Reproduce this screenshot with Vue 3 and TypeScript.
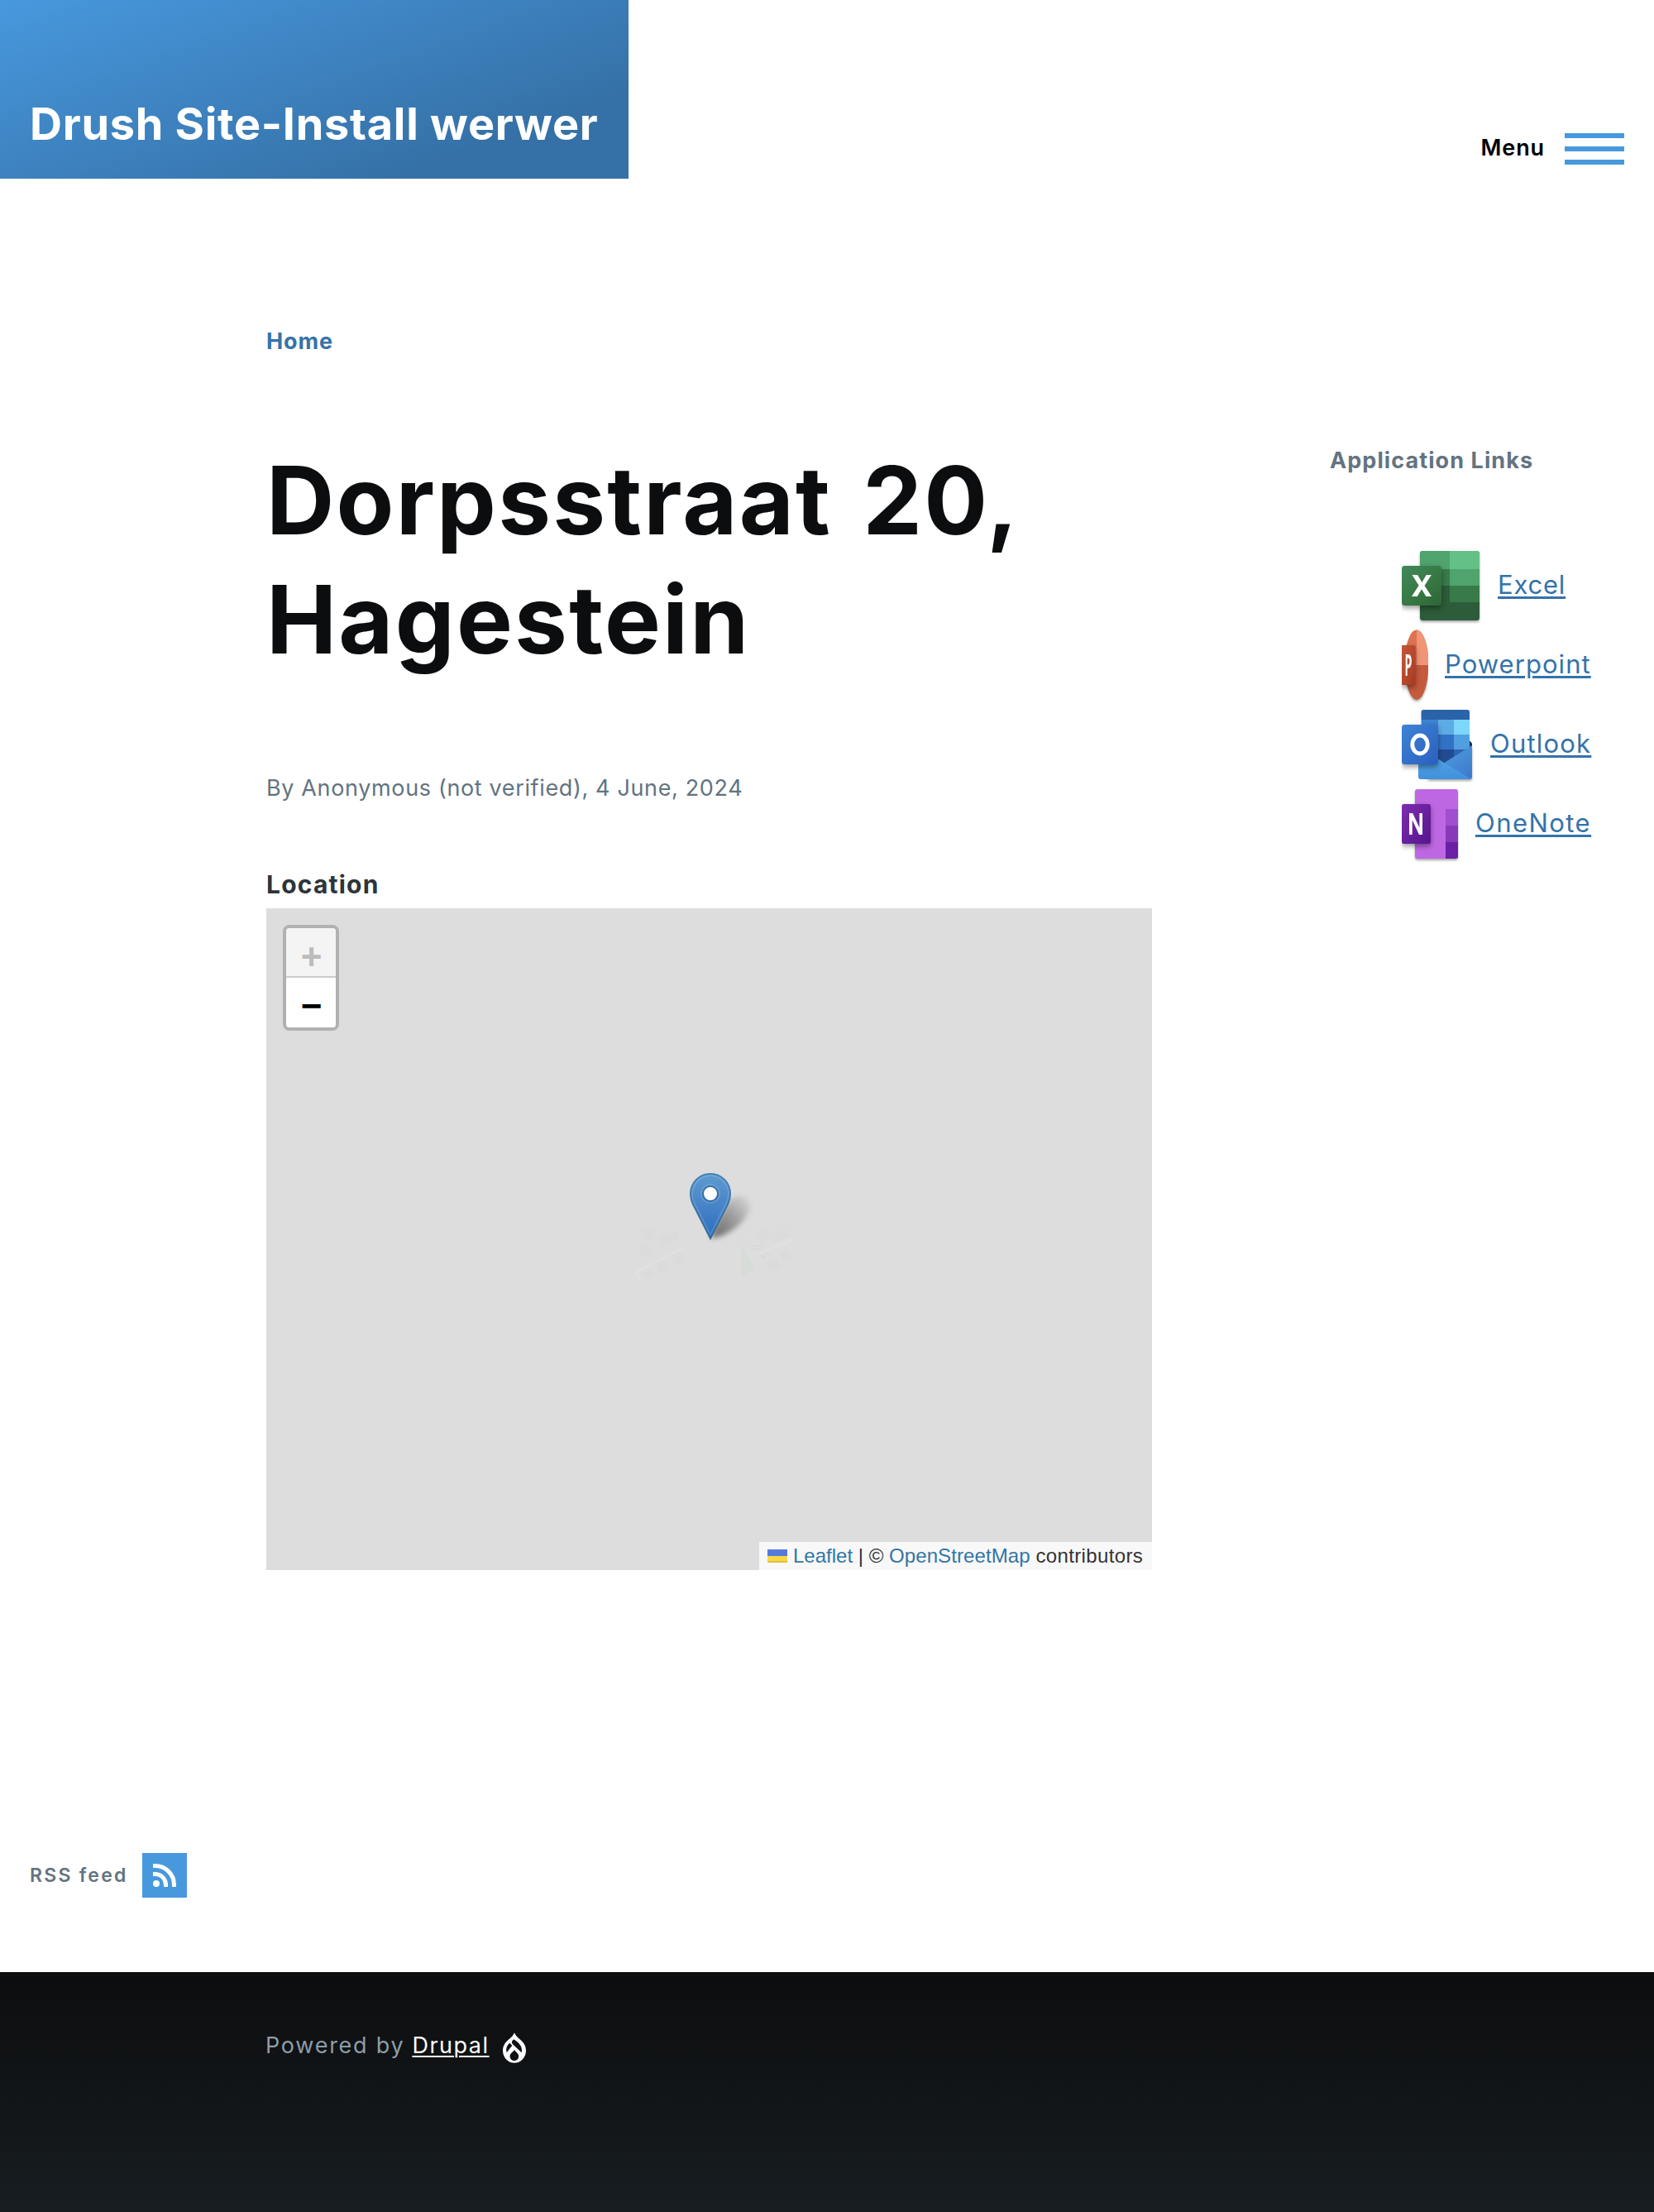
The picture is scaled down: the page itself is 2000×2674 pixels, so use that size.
<script setup lang="ts">
interface AppLink {
  id: 'excel' | 'powerpoint' | 'outlook' | 'onenote'
  label: string
}

const links: AppLink[] = [
  { id: 'excel', label: 'Excel' },
  { id: 'powerpoint', label: 'Powerpoint' },
  { id: 'outlook', label: 'Outlook' },
  { id: 'onenote', label: 'OneNote' },
]
</script>

<template>
  <div class="page">
    <header class="header">
      <div class="brand">Drush Site-Install werwer</div>
      <button class="menu" type="button">
        <span class="menu-label">Menu</span>
        <span class="bars"><i /><i /><i /></span>
      </button>
    </header>

    <nav class="breadcrumb"><a>Home</a></nav>

    <div class="content">
      <main class="main">
        <h1>Dorpsstraat 20, Hagestein</h1>
        <p class="byline">By Anonymous (not verified), 4 June, 2024</p>
        <h2>Location</h2>
        <div class="map">
          <div class="zoom">
            <span class="zoom-btn disabled">+</span>
            <span class="zoom-btn zoom-out">−</span>
          </div>
          <svg class="tiles" width="192" height="64" viewBox="0 0 192 64">
            <g fill="#d9dad9">
              <path d="M8 4l12-2 4 10-10 5zM28 12l12-5 5 11-12 6zM44 3l10 4-3 9-8-3zM4 24l12-4 3 10-11 5zM44 34l12-5 5 11-11 6zM26 44l11-5 5 12-11 5zM10 56l10-4 4 8H10z" />
              <path d="M142 8l14-6 8 9-14 8zM168 6l14-4 5 9-14 5zM158 44l11-7 7 10-11 7zM174 30l10-4 4 12-9 3zM150 28l8-3 3 8-9 3z" />
            </g>
            <g fill="none" stroke="#e3e3e3" stroke-width="3">
              <path d="M0 54L58 24M0 54l6 9M151 31l40-17" />
            </g>
            <path d="M128 18l18 33-18 11z" fill="#d6dcd6" />
            <path d="M138 22h15M140 26h12" stroke="#d8d3d0" stroke-width="1.5" />
            <circle cx="155" cy="35" r="1.8" fill="#cbd6de" />
          </svg>
          <svg class="marker" width="100" height="86" viewBox="0 0 100 86">
            <defs>
              <linearGradient id="pin" x1="0" y1="0" x2="0" y2="1">
                <stop offset="0" stop-color="#5d9bd0" />
                <stop offset="1" stop-color="#2f6cc0" />
              </linearGradient>
              <linearGradient id="pinEdge" x1="0" y1="0" x2="0" y2="1">
                <stop offset="0" stop-color="#4681b6" />
                <stop offset="1" stop-color="#2e6c97" />
              </linearGradient>
              <linearGradient id="cast" x1="0" y1="1" x2="1" y2="0">
                <stop offset="0" stop-color="#000" stop-opacity=".55" />
                <stop offset=".5" stop-color="#000" stop-opacity=".3" />
                <stop offset="1" stop-color="#000" stop-opacity="0" />
              </linearGradient>
              <filter id="soft" x="-30%" y="-30%" width="160%" height="160%">
                <feGaussianBlur stdDeviation="3" />
              </filter>
            </defs>
            <path d="M26 80C32 60 44 32 58 29c13-2 20 9 12 21C62 66 42 78 26 80z" fill="url(#cast)" filter="url(#soft)" />
            <path d="M25 80L3.800 38.500C1.800 34.500 1 30.500 1 26a24 24 0 0 1 48 0c0 4.500-.8 8.500-2.800 12.500z" fill="url(#pin)" stroke="url(#pinEdge)" stroke-width="2" />
            <path d="M25 75.500L5.700 37.500C3.800 33.600 3 30 3 26a22 22 0 0 1 44 0c0 4-.8 7.600-2.700 11.500z" fill="none" stroke="#fff" stroke-opacity=".14" stroke-width="2" />
            <circle cx="25" cy="26" r="11" fill="none" stroke="#fff" stroke-opacity=".12" stroke-width="2" />
            <circle cx="25" cy="26" r="9" fill="#fff" stroke="#376fa5" stroke-width="2" />
          </svg>
          <div class="attribution">
            <svg class="flag" width="24" height="16" viewBox="0 0 24 16">
              <path fill="#567adb" d="M0 0h24v8H0z" />
              <path fill="#f8d848" d="M0 8h24v6H0z" />
              <path fill="#dfc03c" d="M0 14h24v2H0z" />
            </svg>
            <p><a>Leaflet</a> | © <a class="osm">OpenStreetMap</a> <span class="contrib">contributors</span></p>
          </div>
        </div>
      </main>

      <aside class="sidebar">
        <h3>Application Links</h3>
        <ul>
          <li v-for="link in links" :key="link.id">
            <svg v-if="link.id === 'excel'" width="96" height="96" viewBox="0 0 96 96">
              <defs>
                <linearGradient id="xl" x1="0" y1="0" x2="1" y2="1">
                  <stop offset="0" stop-color="#41885a" />
                  <stop offset=".5" stop-color="#387a46" />
                  <stop offset="1" stop-color="#2e6635" />
                </linearGradient>
                <clipPath id="xlBook"><rect x="22" y="6" width="72" height="84" rx="3.500" /></clipPath>
              </defs>
              <rect class="book" x="22" y="6" width="72" height="84" rx="3.500" fill="#2d5c3a" />
              <g clip-path="url(#xlBook)">
                <path fill="#4fa36c" d="M22 6h36v22H22z" />
                <path fill="#63c188" d="M58 6h36v22H58z" />
                <path fill="#387a49" d="M22 28h36v20H22z" />
                <path fill="#4fa36c" d="M58 28h36v20H58z" />
                <path fill="#387a49" d="M58 48h36v20H58z" />
              </g>
              <rect class="tile" x="0" y="24" width="48" height="48" rx="3.500" fill="url(#xl)" />
              <path d="M12.500 35h6.600l5.300 9 5.200-9h6.200l-8.300 12.900L36 61h-6.700l-5.300-8.800L18.700 61H12l8.600-13.200z" fill="#fff" />
            </svg>
            <svg v-else-if="link.id === 'powerpoint'" width="32" height="96" viewBox="0 0 32 96">
              <defs>
                <linearGradient id="pp" x1="0" y1="0" x2="1" y2="1">
                  <stop offset="0" stop-color="#c4583a" />
                  <stop offset="1" stop-color="#a93a20" />
                </linearGradient>
                <clipPath id="ppDisc"><ellipse cx="18" cy="47.700" rx="14.300" ry="42.300" /></clipPath>
              </defs>
              <ellipse class="book" cx="18" cy="47.700" rx="14.300" ry="42.300" fill="#c55b3d" />
              <g clip-path="url(#ppDisc)">
                <path fill="#dd7353" d="M0 0h18v48H0z" />
                <path fill="#f09676" d="M18 0h18v48H18z" />
              </g>
              <rect class="tile" x="-1" y="24" width="17.500" height="48" rx="1.800" fill="url(#pp)" />
              <path fill-rule="evenodd" d="M4.700 35h3.200c2.600 0 4 3 4 8s-1.500 8.800-4.200 8.800h-1V61h-2zM6.700 39.500v8h.8c1.300 0 2-1.500 2-4.200s-.7-3.800-2-3.800z" fill="#fff" />
            </svg>
            <svg v-else-if="link.id === 'outlook'" width="87" height="96" viewBox="0 0 87 96">
              <defs>
                <linearGradient id="ol" x1="0" y1="0" x2="1" y2="1">
                  <stop offset="0" stop-color="#3d84d6" />
                  <stop offset="1" stop-color="#2b5fc0" />
                </linearGradient>
                <linearGradient id="olFlap" x1="0" y1="0" x2="0" y2="1">
                  <stop offset="0" stop-color="#5aade8" />
                  <stop offset="1" stop-color="#4090dc" />
                </linearGradient>
                <linearGradient id="olSide" x1="0" y1="0" x2="1" y2="1">
                  <stop offset="0" stop-color="#55a5e3" />
                  <stop offset="1" stop-color="#3b78cc" />
                </linearGradient>
              </defs>
              <path fill="#152c57" d="M76 44h7l2 3v8H76z" />
              <path fill="#2b63ab" d="M23.500 18V9a3 3 0 0 1 3-3H79a3 3 0 0 1 3 3v9z" />
              <path fill="#3c83d2" d="M23.500 18H44v18H23.500z" />
              <path fill="#5cabe5" d="M44 18h19v18H44z" />
              <path fill="#7dd7fb" d="M63 18h19v18H63z" />
              <path fill="#3272c4" d="M23.500 36H63v18H23.500z" />
              <path fill="#509fe0" d="M63 36h19v18H63z" />
              <path fill="#2859a4" d="M23.500 54H44v18H23.500z" />
              <path fill="#224b91" d="M44 54h19v18H44z" />
              <path fill="#2f64b5" d="M63 54h19v10H63z" />
              <path class="book" fill="url(#olSide)" d="M85 49v38a3 3 0 0 1-3 3H30l23-21z" />
              <path fill="url(#olFlap)" d="M20 51l63 38.200a3 3 0 0 1-1.500.800H23a3 3 0 0 1-3-3z" />
              <rect class="tile" x="0" y="24" width="44" height="48" rx="3.500" fill="url(#ol)" />
              <ellipse cx="22" cy="48" rx="9.200" ry="11" fill="none" stroke="#fff" stroke-width="4.800" />
            </svg>
            <svg v-else width="69" height="96" viewBox="0 0 69 96">
              <defs>
                <linearGradient id="on" x1="0" y1="0" x2="1" y2="1">
                  <stop offset="0" stop-color="#7c2db0" />
                  <stop offset="1" stop-color="#57158d" />
                </linearGradient>
                <clipPath id="onBook"><rect x="16" y="6" width="52" height="84" rx="3" /></clipPath>
              </defs>
              <rect class="book" x="16" y="6" width="52" height="84" rx="3" fill="#bd68e2" />
              <g clip-path="url(#onBook)">
                <path fill="#a04fd0" d="M53 30h16v20H53z" />
                <path fill="#8739b9" d="M53 50h16v20H53z" />
                <path fill="#6b1fa4" d="M53 70h16v21H53z" />
              </g>
              <rect class="tile" x="0" y="24" width="35" height="48" rx="2.800" fill="url(#on)" />
              <path d="M9 35h4.200l8.200 17.500V35H25v26h-4L12.700 43.300V61H9z" fill="#fff" />
            </svg>
            <a :class="link.id">{{ link.label }}</a>
          </li>
        </ul>
      </aside>
    </div>

    <div class="feed">
      <span>RSS feed</span>
      <svg width="54" height="54" viewBox="0 0 54 54">
        <path fill="#4898de" d="M0 0h54v54H0z" />
        <circle cx="17" cy="37" r="4" fill="#fff" />
        <path d="M15.500 25.500C23 25.500 28.500 31.500 28.500 38.500M15.500 15.500C28 15.500 38.500 25.500 38.500 38.500" fill="none" stroke="#fff" stroke-width="5" stroke-linecap="square" stroke-linejoin="round" />
      </svg>
    </div>

    <footer class="footer">
      <span>Powered by</span>
      <a>Drupal</a>
      <svg width="28" height="37" viewBox="0 0 84 110">
        <path fill="#fff" d="M42 0c4 10 12 17 20 24 12 10 22 22 22 41 0 26-19 45-42 45S0 91 0 65c0-19 10-31 22-41C30 17 38 10 42 0z" />
        <path fill="#0f1214" d="M40 24c10 6 20 14 25 24 4 8 5 16 3 24L36 42c-6-6-4-12 4-18zM25 38l9 9-20 25c-4-14 1-26 11-34zM42 63l12 13a16 16 0 1 1-25 0z" />
      </svg>
    </footer>
  </div>
</template>

<style>
body {
  background: #fff;
}
</style>

<style scoped>
.page {
  width: 2000px;
  height: 2674px;
  overflow: hidden;
  display: flex;
  flex-direction: column;
  background: #fff;
  font-family: Inter, 'Open Sans', sans-serif;
}

.header {
  display: flex;
  justify-content: space-between;
  height: 216px;
}

.brand {
  box-sizing: border-box;
  width: 760px;
  padding: 118px 0 0 36px;
  background-image: linear-gradient(160deg, #4898de 0%, #3571a7 78.66%);
  color: #fff;
  font-size: 54px;
  font-weight: 700;
  line-height: 64px;
  letter-spacing: 0.72px;
  white-space: nowrap;
}

.menu {
  display: flex;
  align-items: flex-start;
  padding: 161px 36px 0 0;
  border: 0;
  background: none;
  color: #000;
  font-family: inherit;
}

.menu-label {
  margin: 2px 24px 0 0;
  font-size: 27px;
  font-weight: 600;
  line-height: 32px;
  letter-spacing: 0.9px;
}

.bars {
  display: flex;
  flex-direction: column;
  gap: 10px;
}

.bars i {
  width: 72px;
  height: 6px;
  background: #4898de;
}

.breadcrumb {
  margin: 181px 0 0 322px;
  color: #3473a9;
  font-size: 27px;
  font-weight: 700;
  line-height: 32px;
  letter-spacing: 0.9px;
}

.content {
  display: flex;
  gap: 215px;
  margin: 104px 0 0 322px;
}

.main {
  width: 1071px;
}

h1,
h2,
h3,
p,
ul {
  margin: 0;
  padding: 0;
}

h1 {
  color: #0c0d0e;
  font-size: 114px;
  font-weight: 700;
  line-height: 144px;
  letter-spacing: 2.2px;
  word-spacing: 8px;
}

.byline {
  margin-top: 116px;
  color: #637380;
  font-size: 27px;
  line-height: 32px;
  letter-spacing: 0.64px;
}

h2 {
  margin: 82px 0 11px;
  color: #2c343a;
  font-size: 30px;
  font-weight: 700;
  line-height: 36px;
  letter-spacing: 1.2px;
}

.map {
  position: relative;
  height: 800px;
  background: #ddd;
}

.zoom {
  position: absolute;
  top: 20px;
  left: 20px;
  width: 60px;
  overflow: hidden;
  border: 4px solid #b1b1b1;
  border-radius: 8px;
}

.zoom-btn {
  display: block;
  height: 60px;
  background: #fff;
  color: #000;
  font: bold 44px/69px 'Liberation Sans', Arial, sans-serif;
  text-align: center;
  text-indent: 1px;
}

.zoom-btn.disabled {
  height: 58px;
  border-bottom: 2px solid #ccc;
  background: #f4f4f4;
  color: #bbb;
}

.zoom-out {
  line-height: 67px;
}

.tiles {
  position: absolute;
  top: 386px;
  left: 446px;
  opacity: 0.6;
}

.marker {
  position: absolute;
  top: 319px;
  left: 512px;
}

.attribution {
  position: absolute;
  right: 0;
  bottom: 0;
  display: flex;
  box-sizing: border-box;
  width: 475px;
  height: 34px;
  padding-left: 10px;
  background: #f8f8f8;
  color: #333;
  font: 24px/34px 'Liberation Sans', Arial, sans-serif;
  white-space: nowrap;
}

.attribution a {
  color: #3276a6;
}

.attribution .osm {
  letter-spacing: 0.1px;
}

.contrib {
  letter-spacing: 0.36px;
}

.flag {
  margin: 9px 7px 0 0;
}

.sidebar {
  padding-top: 8px;
}

h3 {
  color: #637380;
  font-size: 27px;
  font-weight: 700;
  line-height: 32px;
  letter-spacing: 1.08px;
}

ul {
  margin: 87px 0 0 87px;
  list-style: none;
}

li {
  display: flex;
  gap: 20px;
  height: 96px;
}

li a {
  color: #3473a9;
  font-size: 31px;
  line-height: 93px;
  letter-spacing: 1.2px;
  text-decoration: underline 3px;
  text-underline-offset: 3px;
}

li .excel {
  letter-spacing: 0.8px;
}

li .powerpoint {
  letter-spacing: 1.05px;
}

li .onenote {
  letter-spacing: 1.45px;
}

.book {
  filter: drop-shadow(0 2px 1.5px rgba(0, 0, 0, 0.35));
}

.tile {
  filter: drop-shadow(0 3px 3px rgba(0, 0, 0, 0.4));
}

.feed {
  display: flex;
  align-items: center;
  gap: 17px;
  height: 54px;
  margin: 342px 0 90px 36px;
  color: #637380;
  font-size: 23px;
  font-weight: 600;
  line-height: 52px;
  letter-spacing: 2.25px;
}

.footer {
  display: flex;
  flex: 1;
  align-items: flex-start;
  padding: 73px 0 0 321px;
  background: linear-gradient(#0c0d0e, #171d21);
  color: #8e9da8;
  font-size: 27px;
  line-height: 32px;
  letter-spacing: 1.75px;
}

.footer a {
  margin: 0 16px 0 9px;
  color: #fff;
  letter-spacing: 1.5px;
  text-decoration: underline 2px;
  text-underline-offset: 3px;
}
</style>
